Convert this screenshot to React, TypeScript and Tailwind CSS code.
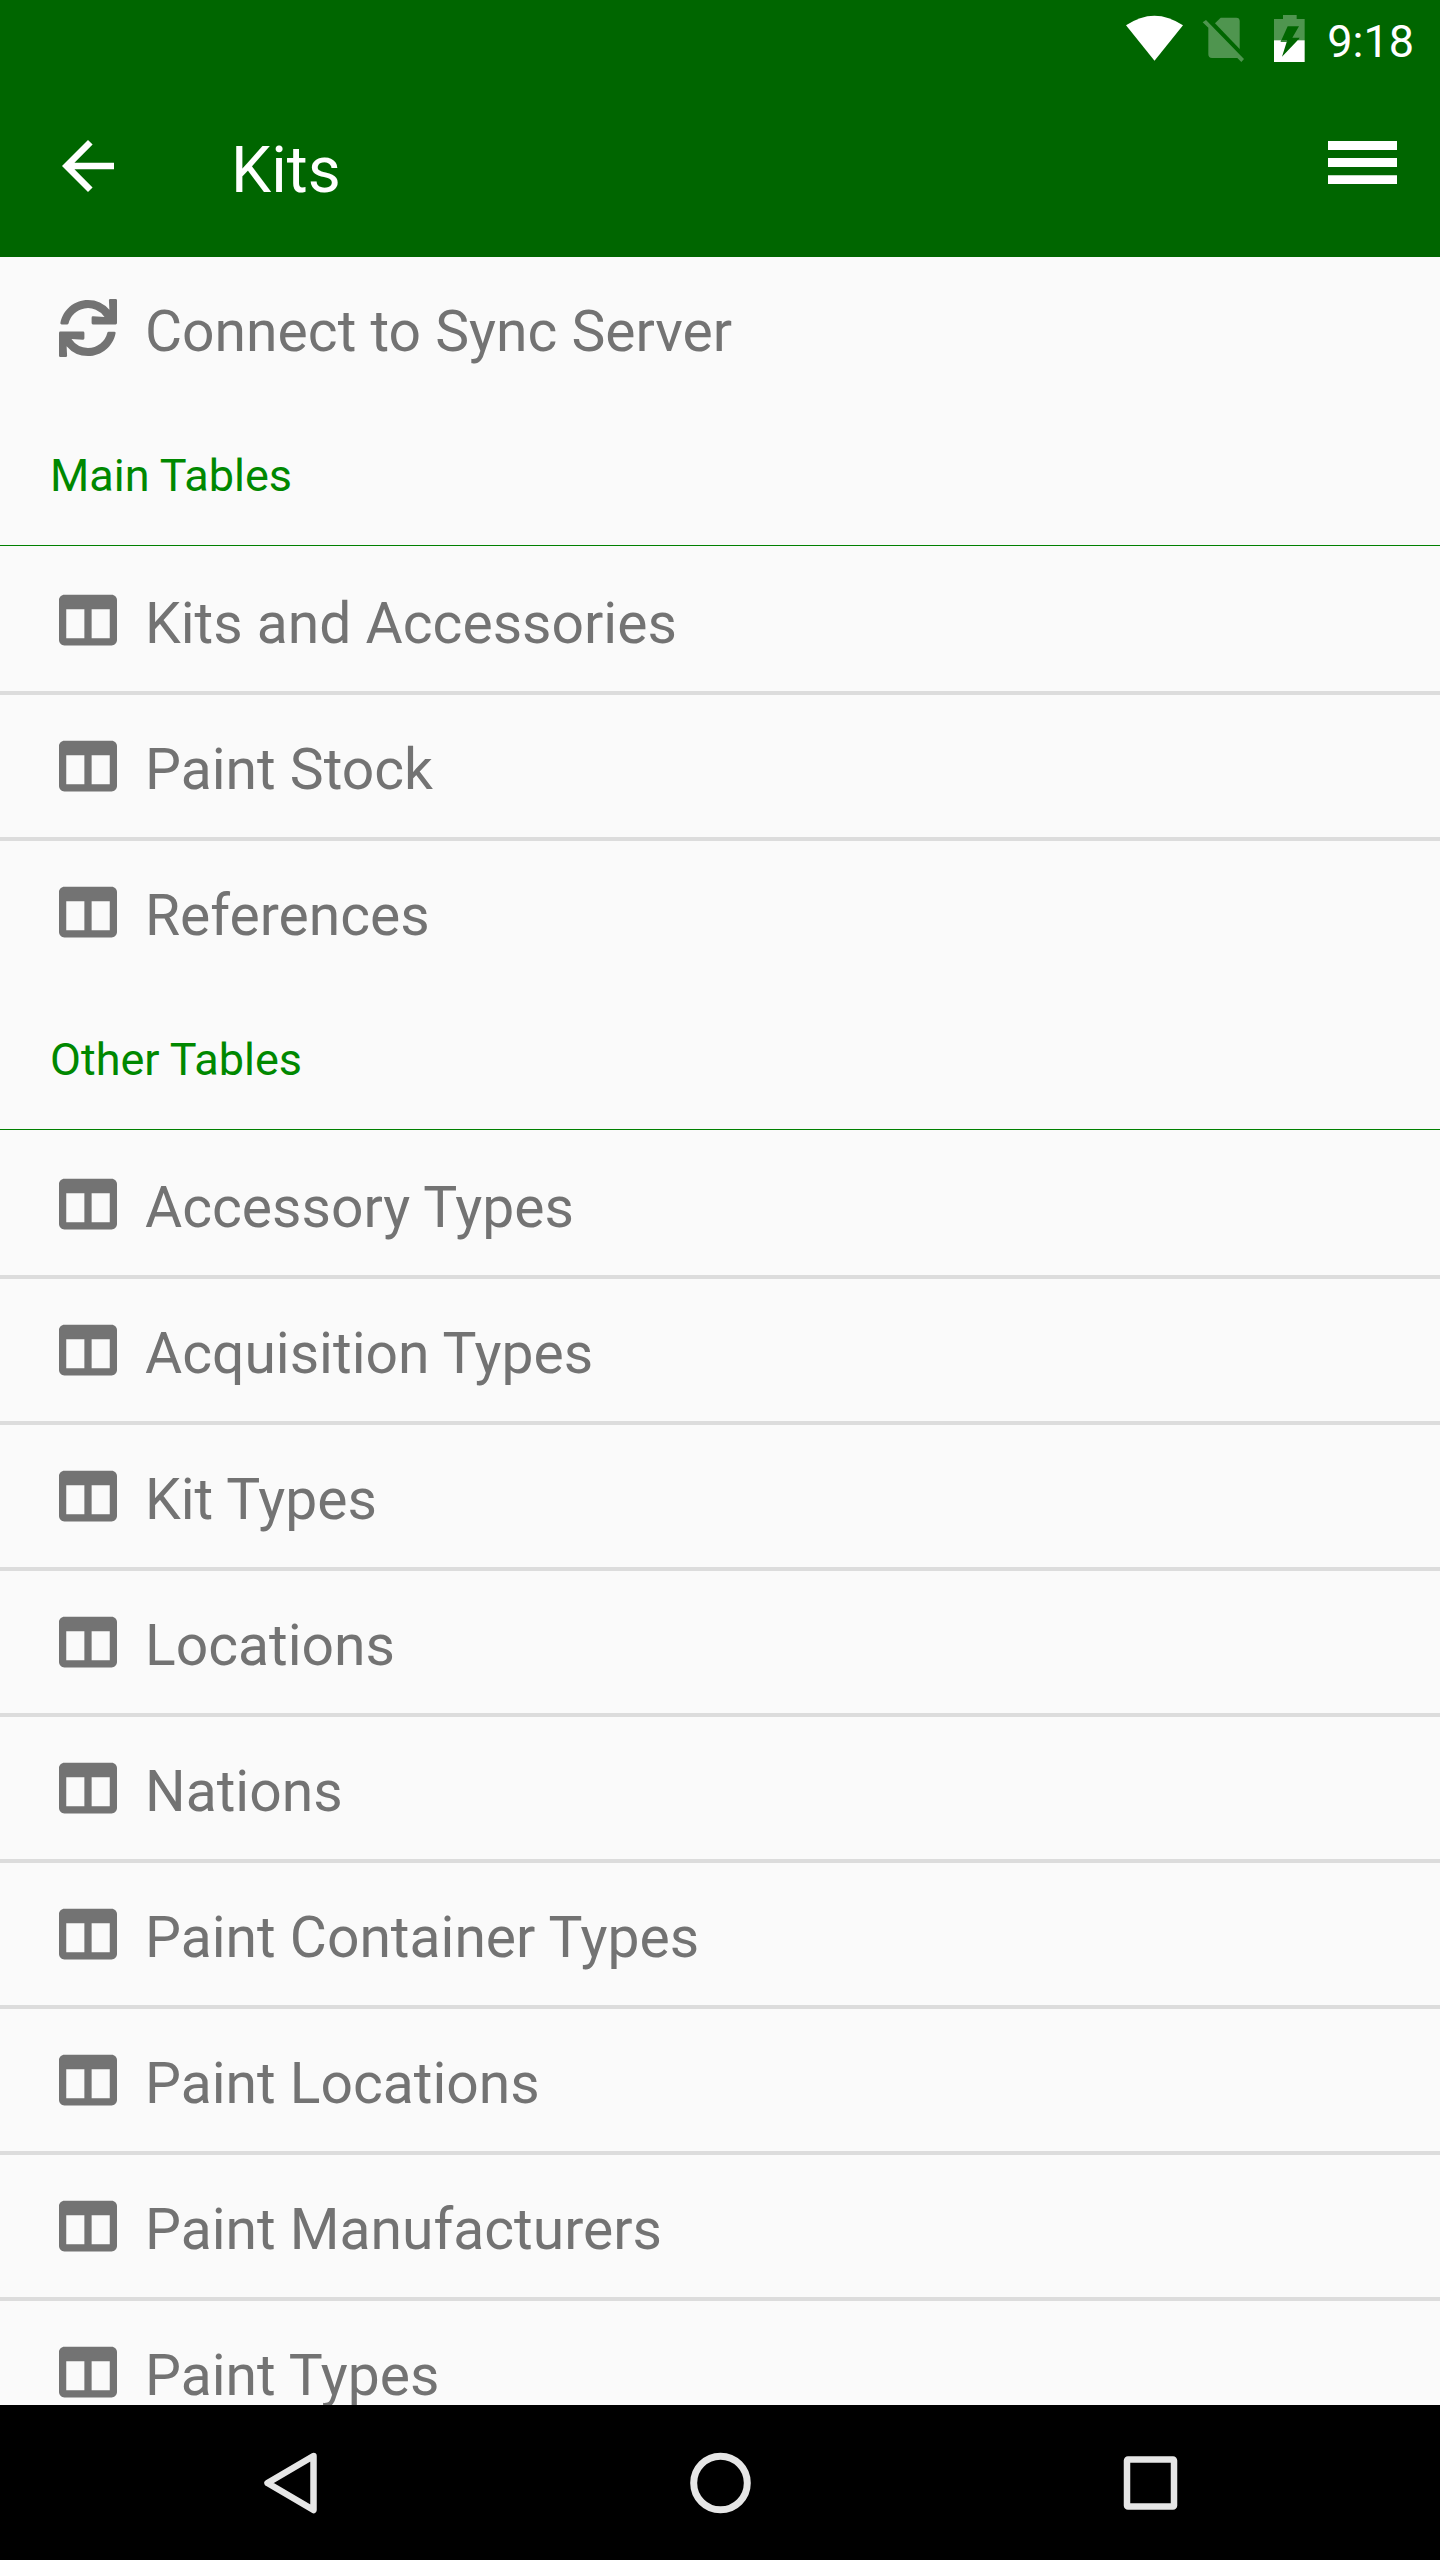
import { FaColumns, FaSync } from "react-icons/fa";
import { MdArrowBack } from "react-icons/md";

const mainTables = ["Kits and Accessories", "Paint Stock", "References"];

const otherTables = [
  "Accessory Types",
  "Acquisition Types",
  "Kit Types",
  "Locations",
  "Nations",
  "Paint Container Types",
  "Paint Locations",
  "Paint Manufacturers",
  "Paint Types",
];

function StatusBar() {
  return (
    <div className="flex h-[78px] items-center justify-end gap-4 pr-[26px]">
      <svg className="h-12 w-[60px]" viewBox="75 45 180 144" fill="#fff" aria-hidden="true">
        <path d="M78 76Q163 18 249 76L163.500 182Z" />
      </svg>
      <svg className="h-12 w-[49px]" viewBox="303 45 147 144" fill="#fff" fillOpacity="0.31" aria-hidden="true">
        <path d="M345 70L362 53H409Q419 53 419 63V147Z" />
        <path d="M318 60L432 177L424 186L412 174H336Q325 174 325 163V83L308 67Z" />
      </svg>
      <svg className="h-12 w-[45px]" viewBox="498 45 135 144" fill="#fff" aria-hidden="true">
        <path
          fillOpacity="0.31"
          fillRule="evenodd"
          d="M549 45H590V57H614V121H522V57H549ZM563 79H597L577 113H599L594 121H561L562 125H542Z"
        />
        <path d="M522 121H543L542 126H560L546 170L593 121H614V186H522Z" />
      </svg>
      <span className="pt-1 text-[45px] leading-none">9:18</span>
    </div>
  );
}

function Toolbar() {
  return (
    <div className="flex h-[179px] items-center pr-[43px] pl-[49px]">
      <button type="button" aria-label="Back" className="pb-1">
        <MdArrowBack className="size-[78px]" />
      </button>
      <h1 className="flex-1 pt-1.5 pl-[104px] text-[64px] leading-none">Kits</h1>
      <button type="button" aria-label="Menu" className="pb-2.5">
        <svg className="h-[43px] w-[69px]" viewBox="0 0 207 129" fill="currentColor" aria-hidden="true">
          <path d="M0 0H207V27H0ZM0 51H207V78H0ZM0 103H207V129H0Z" />
        </svg>
      </button>
    </div>
  );
}

function Row({ label, sync = false }: { label: string; sync?: boolean }) {
  return (
    <button type="button" className="flex h-[142px] w-full items-center gap-7 pl-[59px] text-left">
      {sync ? <FaSync className="size-[58px] shrink-0" /> : <FaColumns className="size-[58px] shrink-0" />}
      <span className="pt-1.5 text-[57px] leading-none">{label}</span>
    </button>
  );
}

function Section({ title, items }: { title: string; items: string[] }) {
  return (
    <section className="pt-1">
      <h2 className="mb-[3px] flex h-[143px] items-center border-b border-[#008000] pl-[50px] text-[45px] leading-none text-[#008800]">
        <span className="pt-0.5">{title}</span>
      </h2>
      <ul className="divide-y-4 divide-[#dcdcdc]">
        {items.map((item) => (
          <li key={item}>
            <Row label={item} />
          </li>
        ))}
      </ul>
    </section>
  );
}

function NavBar() {
  return (
    <nav className="grid h-[155px] shrink-0 grid-cols-3 bg-black px-[75px] text-[#e6e6e6]">
      <button type="button" aria-label="Back" className="flex items-center justify-center">
        <svg className="size-16" viewBox="0 0 64 64" fill="none" stroke="currentColor" strokeWidth="6.500" strokeLinejoin="round" aria-hidden="true">
          <path d="M55.500 5L9.500 32L55.500 59Z" />
        </svg>
      </button>
      <button type="button" aria-label="Home" className="flex items-center justify-center">
        <svg className="size-16" viewBox="0 0 64 64" fill="none" stroke="currentColor" strokeWidth="7" aria-hidden="true">
          <circle cx="32.500" cy="32" r="26.800" />
        </svg>
      </button>
      <button type="button" aria-label="Recent apps" className="flex items-center justify-center">
        <svg className="size-16" viewBox="0 0 64 64" fill="none" stroke="currentColor" strokeWidth="6.500" strokeLinejoin="round" aria-hidden="true">
          <rect x="9" y="8.500" width="47" height="47" rx="1" />
        </svg>
      </button>
    </nav>
  );
}

export default function App() {
  return (
    <div className="flex h-screen flex-col bg-[#fafafa] font-['Roboto',sans-serif] text-[#737373]">
      <header className="shrink-0 bg-[#006600] text-white">
        <StatusBar />
        <Toolbar />
      </header>
      <main className="min-h-0 flex-1 overflow-y-auto [scrollbar-width:none]">
        <Row label="Connect to Sync Server" sync />
        <Section title="Main Tables" items={mainTables} />
        <Section title="Other Tables" items={otherTables} />
      </main>
      <NavBar />
    </div>
  );
}
